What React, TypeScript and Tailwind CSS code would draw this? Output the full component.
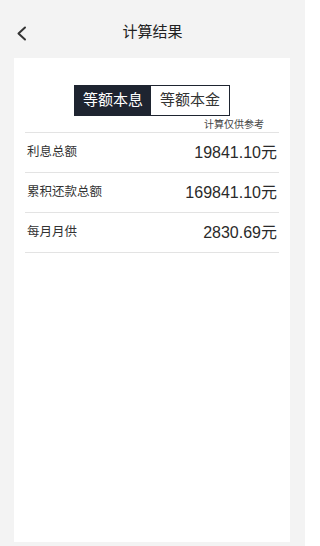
import React from "react";

const rows = [
  { label: "利息总额", value: "19841.10元" },
  { label: "累积还款总额", value: "169841.10元" },
  { label: "每月月供", value: "2830.69元" },
];

export default function App() {
  return (
    <div
      className="w-[305px] h-[546px] bg-[#f3f3f3] flex flex-col overflow-hidden"
      style={{ fontFamily: '"Liberation Sans", "Noto Sans CJK SC", sans-serif' }}
    >
      <div className="mt-[8px] h-[50px] relative flex items-center justify-center">
        <svg
          className="absolute left-[16px] top-[18px]"
          width="11"
          height="15"
          viewBox="0 0 11 15"
          fill="none"
        >
          <polyline
            points="9,1.5 2.5,7.5 9,13.5"
            stroke="#333"
            strokeWidth="2"
            strokeLinecap="round"
            strokeLinejoin="round"
          />
        </svg>
        <span className="text-[15px] text-[#222] -mt-[1px]">计算结果</span>
      </div>
      <div className="mx-[14px] w-[276px] h-[484px] bg-white px-[11px] flex flex-col">
        <div className="mt-[27px] flex justify-center">
          <div className="flex border border-[#1e2430] h-[31px]">
            <div className="w-[76px] bg-[#1e2430] text-white text-[15px] flex items-center justify-center">
              等额本息
            </div>
            <div className="w-[78px] bg-white text-[#333] text-[15px] flex items-center justify-center">
              等额本金
            </div>
          </div>
        </div>
        <div className="flex justify-end pr-[15px] mt-[3px] h-[12px] items-center">
          <span className="text-[10px] text-[#444] leading-none">计算仅供参考</span>
        </div>
        <div className="border-t border-[#e3e3e3] mt-[1px]" />
        {rows.map((r) => (
          <div
            key={r.label}
            className="h-[40px] flex items-center justify-between px-[2px] border-b border-[#e3e3e3]"
          >
            <span className="text-[12.5px] text-[#333]">{r.label}</span>
            <span className="text-[16px] text-[#2a2a2a]">{r.value}</span>
          </div>
        ))}
      </div>
    </div>
  );
}
